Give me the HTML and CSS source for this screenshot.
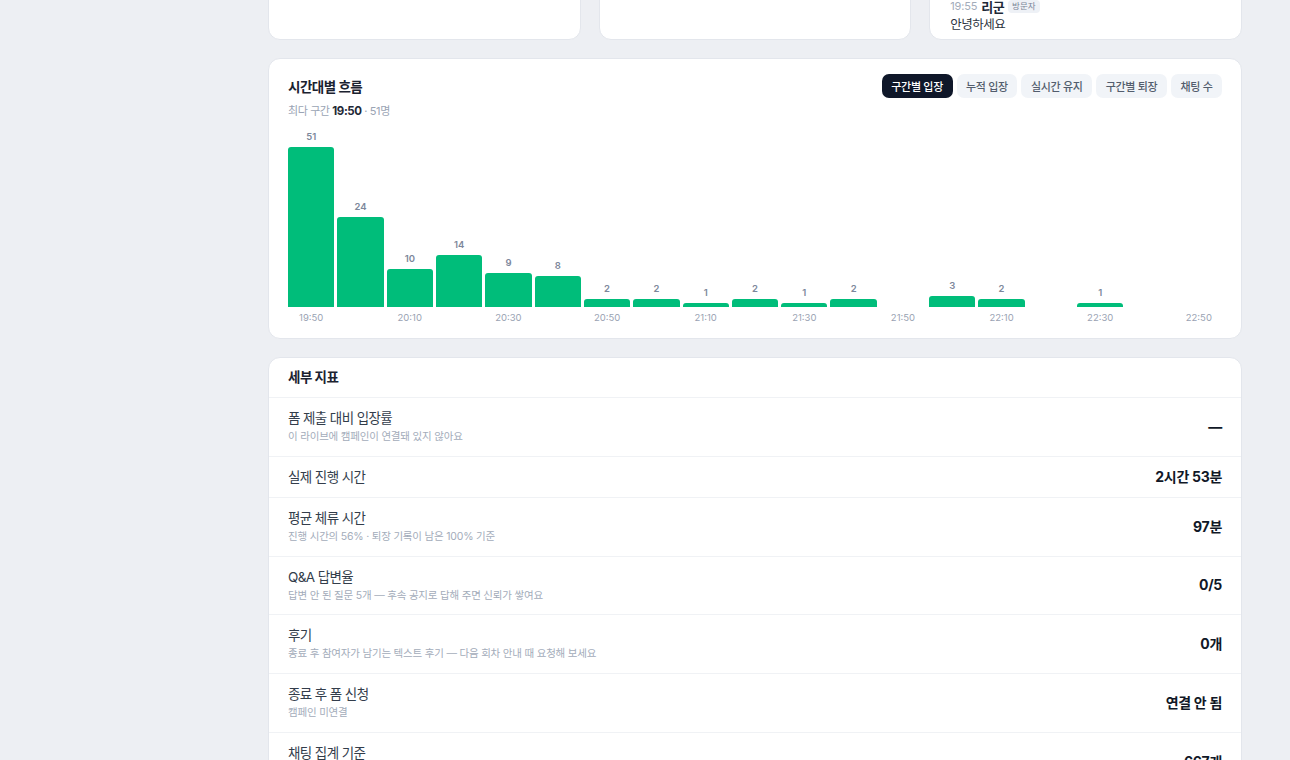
FILE: index.html
```html
<!DOCTYPE html>
<html lang="ko">
<head>
<meta charset="utf-8">
<title>라이브 리포트</title>
<link rel="stylesheet" href="styles.css">
</head>
<body>
<div class="layout">
  <aside class="sidebar"></aside>
  <main class="main">
    <section class="top-row">
      <div class="card top-card"></div>
      <div class="card top-card"></div>
      <div class="card top-card chat-card">
        <div class="chat-msg">
          <div class="chat-meta">
            <span class="chat-time">19:55</span>
            <span class="chat-name">리군</span>
            <span class="chat-badge">방문자</span>
          </div>
          <div class="chat-text">안녕하세요</div>
        </div>
      </div>
    </section>

    <section class="card chart-card">
      <div class="chart-head">
        <h2 class="card-title">시간대별 흐름</h2>
        <div class="tabs">
          <button class="tab active">구간별 입장</button>
          <button class="tab">누적 입장</button>
          <button class="tab">실시간 유지</button>
          <button class="tab">구간별 퇴장</button>
          <button class="tab">채팅 수</button>
        </div>
      </div>
      <div class="chart-sub">최다 구간 <strong>19:50</strong> · 51명</div>
      <div class="bars">
        <div class="slot"><span class="val">51</span><div class="bar" style="height:160px"></div></div>
        <div class="slot"><span class="val">24</span><div class="bar" style="height:90px"></div></div>
        <div class="slot"><span class="val">10</span><div class="bar" style="height:38px"></div></div>
        <div class="slot"><span class="val">14</span><div class="bar" style="height:52px"></div></div>
        <div class="slot"><span class="val">9</span><div class="bar" style="height:34px"></div></div>
        <div class="slot"><span class="val">8</span><div class="bar" style="height:31px"></div></div>
        <div class="slot"><span class="val">2</span><div class="bar" style="height:8px"></div></div>
        <div class="slot"><span class="val">2</span><div class="bar" style="height:8px"></div></div>
        <div class="slot"><span class="val">1</span><div class="bar" style="height:4px"></div></div>
        <div class="slot"><span class="val">2</span><div class="bar" style="height:8px"></div></div>
        <div class="slot"><span class="val">1</span><div class="bar" style="height:4px"></div></div>
        <div class="slot"><span class="val">2</span><div class="bar" style="height:8px"></div></div>
        <div class="slot"></div>
        <div class="slot"><span class="val">3</span><div class="bar" style="height:11px"></div></div>
        <div class="slot"><span class="val">2</span><div class="bar" style="height:8px"></div></div>
        <div class="slot"></div>
        <div class="slot"><span class="val">1</span><div class="bar" style="height:4px"></div></div>
        <div class="slot"></div>
        <div class="slot"></div>
      </div>
      <div class="axis">
        <span>19:50</span><span></span>
        <span>20:10</span><span></span>
        <span>20:30</span><span></span>
        <span>20:50</span><span></span>
        <span>21:10</span><span></span>
        <span>21:30</span><span></span>
        <span>21:50</span><span></span>
        <span>22:10</span><span></span>
        <span>22:30</span><span></span>
        <span>22:50</span>
      </div>
    </section>

    <section class="card detail-card">
      <div class="detail-head">세부 지표</div>
      <div class="row">
        <div class="row-left">
          <div class="row-title">폼 제출 대비 입장률</div>
          <div class="row-sub">이 라이브에 캠페인이 연결돼 있지 않아요</div>
        </div>
        <div class="row-val">—</div>
      </div>
      <div class="row">
        <div class="row-left">
          <div class="row-title">실제 진행 시간</div>
        </div>
        <div class="row-val">2시간 53분</div>
      </div>
      <div class="row">
        <div class="row-left">
          <div class="row-title">평균 체류 시간</div>
          <div class="row-sub">진행 시간의 56% · 퇴장 기록이 남은 100% 기준</div>
        </div>
        <div class="row-val">97분</div>
      </div>
      <div class="row">
        <div class="row-left">
          <div class="row-title">Q&amp;A 답변율</div>
          <div class="row-sub">답변 안 된 질문 5개 — 후속 공지로 답해 주면 신뢰가 쌓여요</div>
        </div>
        <div class="row-val">0/5</div>
      </div>
      <div class="row">
        <div class="row-left">
          <div class="row-title">후기</div>
          <div class="row-sub">종료 후 참여자가 남기는 텍스트 후기 — 다음 회차 안내 때 요청해 보세요</div>
        </div>
        <div class="row-val">0개</div>
      </div>
      <div class="row">
        <div class="row-left">
          <div class="row-title">종료 후 폼 신청</div>
          <div class="row-sub">캠페인 미연결</div>
        </div>
        <div class="row-val">연결 안 됨</div>
      </div>
      <div class="row">
        <div class="row-left">
          <div class="row-title">채팅 집계 기준</div>
          <div class="row-sub">시스템 메시지를 제외한 참여자 채팅</div>
        </div>
        <div class="row-val">667개</div>
      </div>
    </section>
  </main>
</div>
</body>
</html>
```

FILE: styles.css
```css
* { box-sizing: border-box; }
html, body { margin: 0; padding: 0; }
body {
  background: #edeff3;
  font-family: "Inter", "Noto Sans CJK KR", sans-serif;
  color: #1f2937;
  overflow: hidden;
}
.layout {
  display: flex;
  height: 760px;
  overflow: hidden;
}
.sidebar { width: 268px; flex-shrink: 0; }
.main {
  width: 974px;
  display: flex;
  flex-direction: column;
  gap: 18px;
}
.card {
  background: #fff;
  border: 1px solid #e3e6ec;
  border-radius: 12px;
}
.top-row {
  display: grid;
  grid-template-columns: repeat(3, 1fr);
  gap: 18px;
  margin-top: -119px;
}
.top-card { height: 159px; }
.chat-card {
  display: flex;
  flex-direction: column;
  justify-content: flex-end;
  padding: 0 20px 5px;
}
.chat-meta {
  display: flex;
  align-items: center;
  gap: 4px;
  height: 14px;
}
.chat-time { font-size: 11px; color: #a3acba; letter-spacing: -0.2px; }
.chat-name { font-size: 13px; font-weight: 700; color: #1f2937; letter-spacing: -0.5px; }
.chat-badge {
  font-size: 8.5px;
  color: #7b8699;
  background: #eef1f6;
  border-radius: 4px;
  padding: 1px 4px;
  line-height: 11px;
}
.chat-text {
  font-size: 12.5px;
  color: #2b3340;
  line-height: 18px;
  margin-top: 3px;
  letter-spacing: -0.5px;
}

.chart-card { padding: 15px 19px 14px; }
.chart-head {
  display: flex;
  justify-content: space-between;
  align-items: center;
  height: 24px;
}
.card-title {
  margin: 0;
  font-size: 13.5px;
  font-weight: 700;
  color: #1b2230;
  letter-spacing: -0.5px;
}
.tabs { display: flex; gap: 4px; }
.tab {
  font-family: inherit;
  border: 0;
  height: 24px;
  padding: 0 9.5px;
  border-radius: 7px;
  background: #f1f4f8;
  color: #535d6d;
  font-size: 11px;
  font-weight: 500;
  letter-spacing: -0.3px;
  cursor: pointer;
}
.tab.active { background: #0f1729; color: #fff; }
.chart-sub {
  margin-top: 5px;
  font-size: 11px;
  line-height: 16px;
  color: #9aa4b4;
  letter-spacing: -0.4px;
}
.chart-sub strong { color: #1f2937; font-weight: 700; font-size: 11.5px; }
.bars {
  margin-top: 8px;
  height: 180px;
  display: grid;
  grid-template-columns: repeat(19, 1fr);
  gap: 3px;
  align-items: end;
}
.slot {
  display: flex;
  flex-direction: column;
  align-items: center;
  justify-content: flex-end;
  height: 100%;
}
.val {
  font-size: 9.5px;
  line-height: 12px;
  font-weight: 600;
  color: #7d879b;
  margin-bottom: 4px;
}
.bar {
  width: 100%;
  background: #00bd7a;
  border-radius: 3px 3px 0 0;
}
.axis {
  margin-top: 5px;
  display: grid;
  grid-template-columns: repeat(19, 1fr);
  gap: 3px;
  font-size: 9.5px;
  line-height: 12px;
  color: #9aa3b3;
}
.axis span { text-align: center; white-space: nowrap; }

.detail-card { flex-shrink: 0; }
.detail-head {
  padding: 0 19px;
  line-height: 39px;
  font-size: 13.5px;
  font-weight: 700;
  color: #1b2230;
  border-bottom: 1px solid #f0f2f5;
  letter-spacing: -0.5px;
}
.row {
  display: flex;
  justify-content: space-between;
  align-items: center;
  padding: 11px 19px;
  border-bottom: 1px solid #f0f2f5;
}
.row-title {
  font-size: 13.5px;
  line-height: 18px;
  color: #333d4b;
  letter-spacing: -0.6px;
}
.row-sub {
  margin-top: 3px;
  font-size: 10.5px;
  line-height: 14.8px;
  color: #a3acba;
  letter-spacing: -0.2px;
}
.row-val {
  font-size: 14px;
  line-height: 18px;
  font-weight: 700;
  color: #111827;
  letter-spacing: -0.3px;
}
```
